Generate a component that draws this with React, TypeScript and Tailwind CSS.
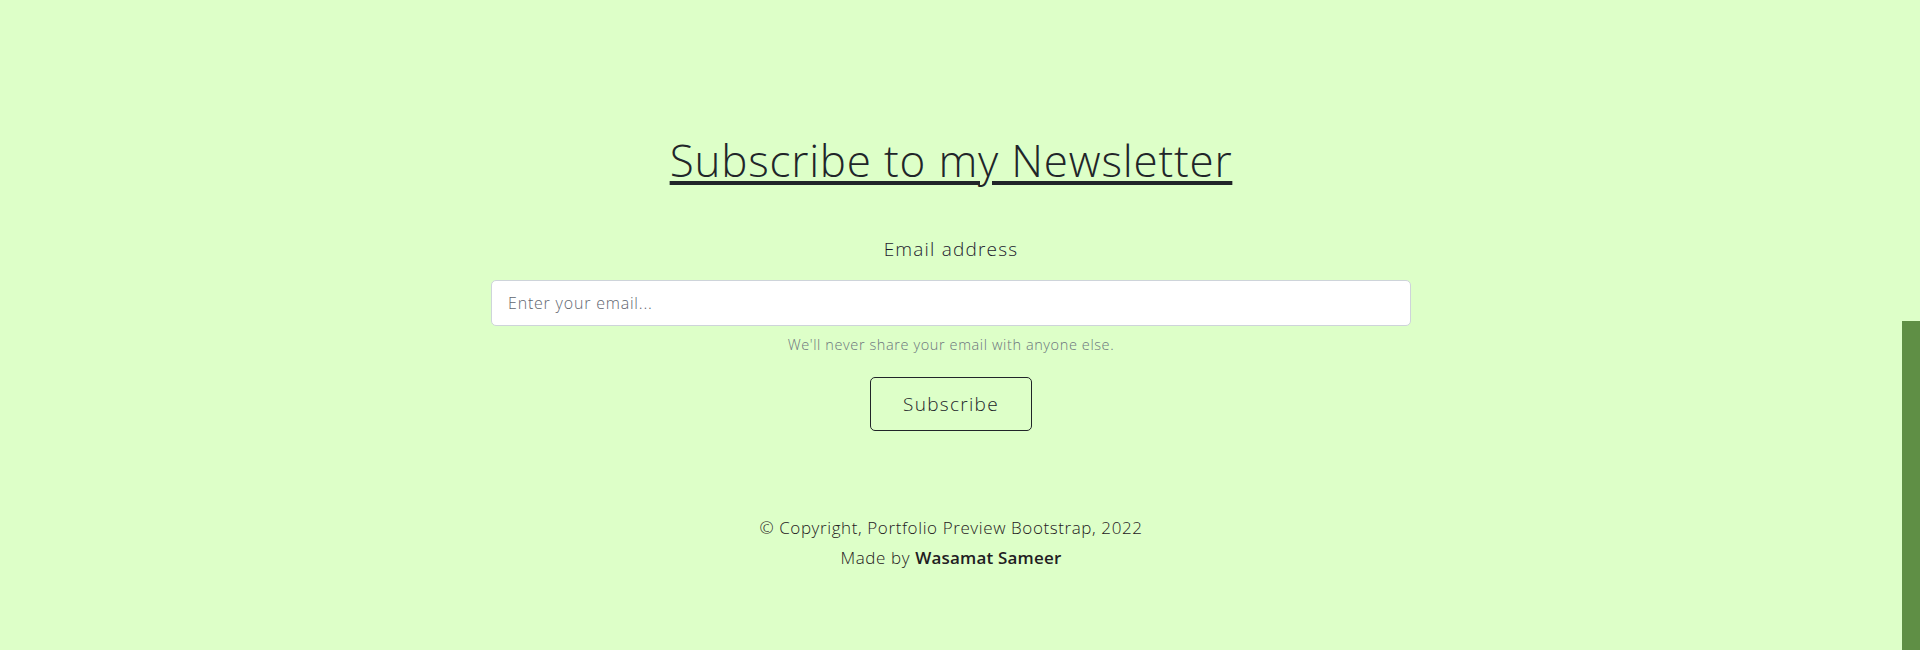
const App = () => {
  return (
    <div className="flex w-full h-[650px] overflow-hidden bg-[#ddffc8] font-['Open_Sans',sans-serif] text-[#212529]">
      <main className="flex-1 flex flex-col items-center pt-[134px]">
        <h2 className="text-[44px] font-light leading-[1.2] underline decoration-[4px] underline-offset-[4px] tracking-[0.8px]">
          Subscribe to my Newsletter
        </h2>
        <form className="w-[920px] mt-[48px] flex flex-col items-center">
          <label htmlFor="email" className="text-[19px] font-light tracking-[1.2px] leading-[1.5] text-[#1c1b2e]">
            Email address
          </label>
          <input
            id="email"
            type="email"
            placeholder="Enter your email..."
            className="mt-[17px] w-full h-[46px] px-4 bg-white border border-[#ced4da] rounded-[5px] text-[16px] font-light tracking-[0.8px] placeholder:text-[#5f6670] focus:outline-none"
          />
          <small className="mt-[8px] text-[14.5px] font-light tracking-[0.6px] text-[#6c757d]">
            We'll never share your email with anyone else.
          </small>
          <button
            type="submit"
            className="mt-[21px] w-[162px] h-[54px] border border-[#212529] rounded-[5px] text-[19px] font-light tracking-[1.3px]"
          >
            Subscribe
          </button>
        </form>
        <footer className="mt-[84px] flex flex-col items-center gap-[4px] text-[17px] font-light tracking-[0.6px] text-[#1f2022]">
          <p>© Copyright, Portfolio Preview Bootstrap, 2022</p>
          <p>
            Made by <span className="font-semibold tracking-[0.2px]">Wasamat Sameer</span>
          </p>
        </footer>
      </main>
      <div className="w-[18px] flex flex-col">
        <div className="h-[321px]" />
        <div className="flex-1 bg-[#5f8f45]" />
      </div>
    </div>
  );
};

export default App;
